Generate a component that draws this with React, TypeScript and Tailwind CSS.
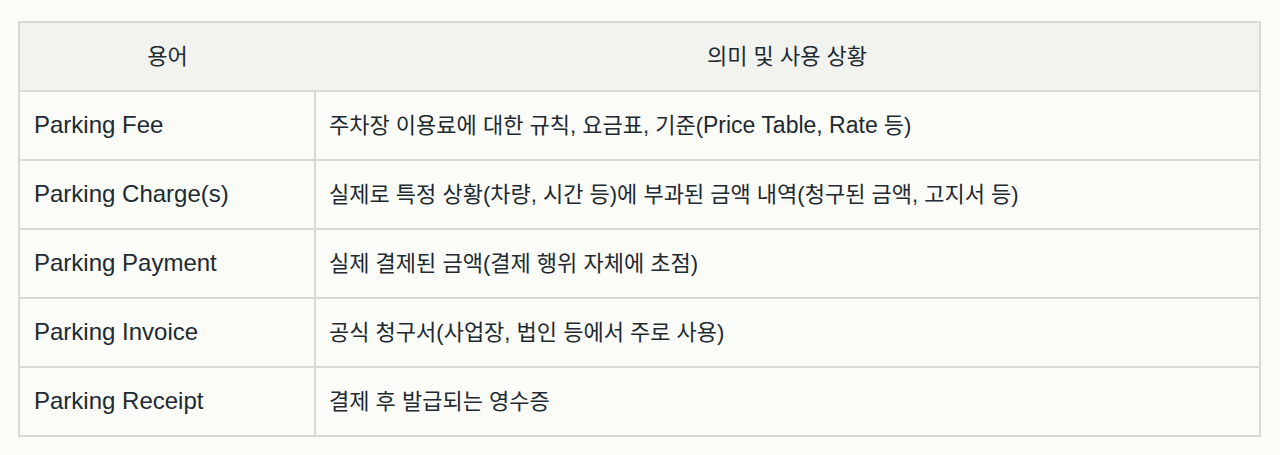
import type { ReactNode } from "react";

const rows: [string, ReactNode][] = [
  [
    "Parking Fee",
    <>
      주차장 이용료에 대한 규칙, 요금표, 기준(<span className="text-[23px]">Price Table, Rate</span> 등)
    </>,
  ],
  ["Parking Charge(s)", "실제로 특정 상황(차량, 시간 등)에 부과된 금액 내역(청구된 금액, 고지서 등)"],
  ["Parking Payment", "실제 결제된 금액(결제 행위 자체에 초점)"],
  ["Parking Invoice", "공식 청구서(사업장, 법인 등에서 주로 사용)"],
  ["Parking Receipt", "결제 후 발급되는 영수증"],
];

export default function App() {
  return (
    <div className="min-h-[455px] bg-[#fbfbf8] pl-[18px] pr-[19px] pt-[21px] font-['Liberation_Sans','Noto_Sans_CJK_KR',sans-serif] text-[#1d2a31]">
      <table className="w-full border-collapse border-2 border-[#dadad3]">
        <thead>
          <tr className="h-[69px] bg-[#f2f2ee]">
            <th className="w-[296px] pb-[1px] text-center text-[22px] font-normal">용어</th>
            <th className="pb-[1px] text-center text-[22px] font-normal">의미 및 사용 상황</th>
          </tr>
        </thead>
        <tbody>
          {rows.map(([term, desc]) => (
            <tr key={term} className="h-[69px] border-t-2 border-[#dadad3]">
              <td className="border-r-2 border-[#dadad3] px-[14px] pb-[1px] text-[24px]">{term}</td>
              <td className="px-[13px] pb-[1px] text-[22px]">{desc}</td>
            </tr>
          ))}
        </tbody>
      </table>
    </div>
  );
}
